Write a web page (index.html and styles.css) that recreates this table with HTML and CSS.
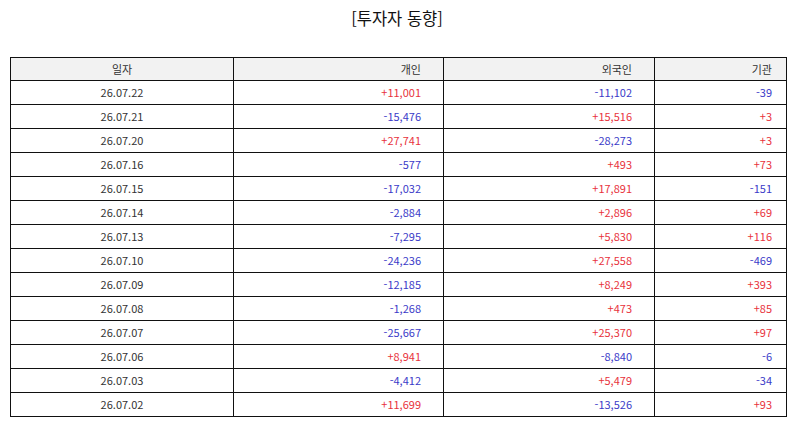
FILE: index.html
```html
<!DOCTYPE html>
<html lang="ko">
<head>
<meta charset="utf-8">
<link rel="stylesheet" href="styles.css">
</head>
<body>
<h1 class="title">[투자자 동향]</h1>
<table class="grid">
<colgroup>
<col class="c-date"><col class="c-ind"><col class="c-for"><col class="c-inst">
</colgroup>
<thead>
<tr><th class="date">일자</th><th class="num">개인</th><th class="num">외국인</th><th class="num last">기관</th></tr>
</thead>
<tbody>
<tr><td class="date">26.07.22</td><td class="num up">+11,001</td><td class="num dn">-11,102</td><td class="num last dn">-39</td></tr>
<tr><td class="date">26.07.21</td><td class="num dn">-15,476</td><td class="num up">+15,516</td><td class="num last up">+3</td></tr>
<tr><td class="date">26.07.20</td><td class="num up">+27,741</td><td class="num dn">-28,273</td><td class="num last up">+3</td></tr>
<tr><td class="date">26.07.16</td><td class="num dn">-577</td><td class="num up">+493</td><td class="num last up">+73</td></tr>
<tr><td class="date">26.07.15</td><td class="num dn">-17,032</td><td class="num up">+17,891</td><td class="num last dn">-151</td></tr>
<tr><td class="date">26.07.14</td><td class="num dn">-2,884</td><td class="num up">+2,896</td><td class="num last up">+69</td></tr>
<tr><td class="date">26.07.13</td><td class="num dn">-7,295</td><td class="num up">+5,830</td><td class="num last up">+116</td></tr>
<tr><td class="date">26.07.10</td><td class="num dn">-24,236</td><td class="num up">+27,558</td><td class="num last dn">-469</td></tr>
<tr><td class="date">26.07.09</td><td class="num dn">-12,185</td><td class="num up">+8,249</td><td class="num last up">+393</td></tr>
<tr><td class="date">26.07.08</td><td class="num dn">-1,268</td><td class="num up">+473</td><td class="num last up">+85</td></tr>
<tr><td class="date">26.07.07</td><td class="num dn">-25,667</td><td class="num up">+25,370</td><td class="num last up">+97</td></tr>
<tr><td class="date">26.07.06</td><td class="num up">+8,941</td><td class="num dn">-8,840</td><td class="num last dn">-6</td></tr>
<tr><td class="date">26.07.03</td><td class="num dn">-4,412</td><td class="num up">+5,479</td><td class="num last dn">-34</td></tr>
<tr><td class="date">26.07.02</td><td class="num up">+11,699</td><td class="num dn">-13,526</td><td class="num last up">+93</td></tr>
</tbody>
</table>
</body>
</html>
```
FILE: styles.css
```css
html, body {
  margin: 0;
  padding: 0;
  background: #ffffff;
}
body {
  font-family: "Noto Sans CJK KR", "Noto Sans", sans-serif;
  color: #333333;
}
.title {
  margin: 0;
  padding-top: 6px;
  height: 57px;
  box-sizing: border-box;
  font-size: 16.5px;
  font-weight: normal;
  line-height: 24px;
  text-align: center;
  color: #111111;
}
.grid {
  margin-left: 10px;
  width: 776px;
  border-collapse: collapse;
  table-layout: fixed;
  font-size: 11px;
}
.c-date { width: 223px; }
.c-ind { width: 210px; }
.c-for { width: 211px; }
.c-inst { width: 132px; }
.grid th, .grid td {
  border: 1px solid #111111;
  height: 22px;
  padding: 0 0 1px 0;
  line-height: 20px;
  font-weight: normal;
  white-space: nowrap;
}
.grid th {
  background: #f2f2f2;
  height: 21px;
  color: #333333;
}
.date { text-align: center; }
.num { text-align: right; padding-right: 22px !important; }
.num.last { padding-right: 14px !important; }
.up { color: #e8323c; }
.dn { color: #3a3ac8; }
```
